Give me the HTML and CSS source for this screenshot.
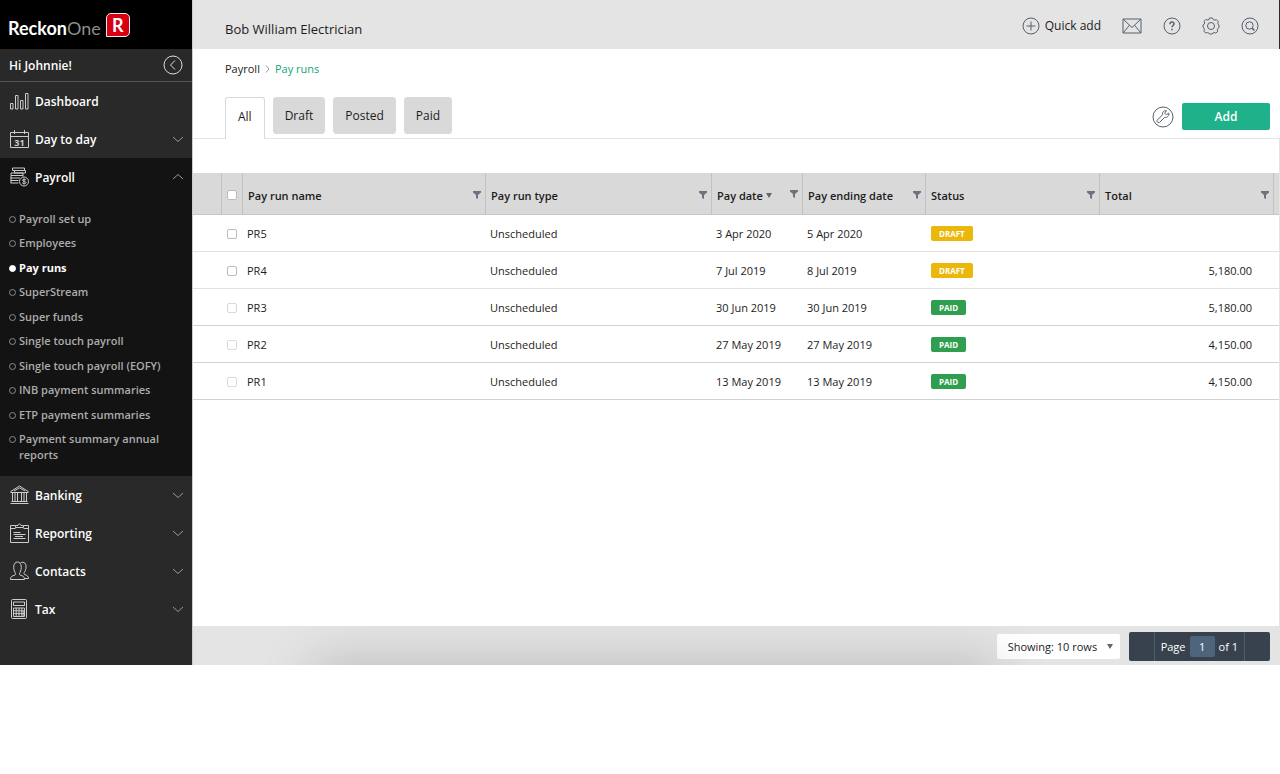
FILE: index.html
```html
<!DOCTYPE html>
<html lang="en">
<head>
    <meta charset="UTF-8">
    <meta name="viewport" content="width=device-width, initial-scale=1.0">
    <title>Pay runs</title>
    <link rel="stylesheet" href="styles.css">
</head>
<body>
    <!-- shared icons -->
    <svg class="sprite" aria-hidden="true">
        <symbol id="chevron" viewBox="0 0 12 8"><path d="M1 2l5 4.500L11 2"/></symbol>
        <symbol id="filter" viewBox="0 0 8 8"><path d="M0 0h8v1.500L5 4v4L3 7V4L0 1.500z"/></symbol>
    </svg>

    <div class="app">
        <aside class="sidebar">
            <div class="logo">
                <span class="logo-text"><b>Reckon</b>One</span>
                <span class="logo-mark">R</span>
            </div>
            <div class="greeting">
                <span>Hi Johnnie!</span>
                <button class="icon-btn" aria-label="Collapse menu">
                    <svg width="20" height="20" viewBox="0 0 20 20"><circle cx="10" cy="10" r="9"/><path d="M12 5.500L7.500 10l4.500 4.500"/></svg>
                </button>
            </div>
            <nav>
                <a class="nav-item" href="#">
                    <svg class="nav-icon" viewBox="0 0 20 20"><path d="M.5 12.500H3V18H.5zM5.500 4.500H8V18H5.500zM10.500 9.500H13V18h-2.500zM15.500 2.500H18V18h-2.500z"/></svg>
                    Dashboard
                </a>
                <a class="nav-item" href="#">
                    <svg class="nav-icon" viewBox="0 0 20 20"><path d="M.5 3.500h18v15H.5zM.5 7.500h18M4.500 1v4M14.500 1v4"/><text x="9.500" y="16.500">31</text></svg>
                    Day to day
                    <svg class="chevron"><use href="#chevron"/></svg>
                </a>
                <div class="nav-group">
                    <a class="nav-item" href="#">
                        <svg class="nav-icon" viewBox="0 0 20 20"><path d="M2.500 1h12v2.500h-12zM4.500 3.500h11V6h-11zM1 6h12v2.500H1zM1 8.500h11M.5 11H10M.5 13.500h8M.5 16h8M1 8.500v7.500M13 8.500v1"/><circle cx="14" cy="14.500" r="4.500"/><path d="M16 13c-1-1.200-3.500-1-3.500.2 0 1.500 3.500.8 3.500 2.400 0 1.300-2.800 1.400-3.800.2M14 11.500v6"/></svg>
                        Payroll
                        <svg class="chevron up"><use href="#chevron"/></svg>
                    </a>
                    <ul class="subnav">
                        <li><a href="#">Payroll set up</a></li>
                        <li><a href="#">Employees</a></li>
                        <li class="current"><a href="#">Pay runs</a></li>
                        <li><a href="#">SuperStream</a></li>
                        <li><a href="#">Super funds</a></li>
                        <li><a href="#">Single touch payroll</a></li>
                        <li><a href="#">Single touch payroll (EOFY)</a></li>
                        <li><a href="#">INB payment summaries</a></li>
                        <li><a href="#">ETP payment summaries</a></li>
                        <li><a href="#">Payment summary annual reports</a></li>
                    </ul>
                </div>
                <a class="nav-item" href="#">
                    <svg class="nav-icon" viewBox="0 0 20 20"><path d="M.8 6.500L9.500 1l8.700 5.500v1H.8zM4 6l5.500-3.200L15 6M2.500 8v8M5 8v8M7.500 8v8M11.500 8v8M14 8v8M16.500 8v8M1.500 16.500h16M.5 18.500h18"/></svg>
                    Banking
                    <svg class="chevron"><use href="#chevron"/></svg>
                </a>
                <a class="nav-item" href="#">
                    <svg class="nav-icon" viewBox="0 0 20 20"><path d="M5.500 2.500h-5v17h18v-17h-5M.5 5.500h5M13.500 5.500h5M5.500 4.500v-2H8c0-2 3-2 3 0h2.500v2zM3.500 9.500h7M3.500 11.500h12M5 13.500h8M3.500 15.500h12"/></svg>
                    Reporting
                    <svg class="chevron"><use href="#chevron"/></svg>
                </a>
                <a class="nav-item" href="#">
                    <svg class="nav-icon" viewBox="0 0 20 20"><path d="M.5 18.500c0-3 1.500-3.500 4.500-4.500.8-.5.8-1.500 0-2.500C3 8 3 1 7.500 1S12 8 10 11.500c-.8 1-.8 2 0 2.500 3 1 4.500 1.500 4.500 4.500zM10.500 2c1.500-1.500 6-1 5.500 4 0 2-.5 3.500-1.500 5-.7 1-.7 2 0 2.500 3 1 4 2 4 4h-3.500"/></svg>
                    Contacts
                    <svg class="chevron"><use href="#chevron"/></svg>
                </a>
                <a class="nav-item" href="#">
                    <svg class="nav-icon" viewBox="0 0 20 20"><rect x="1.500" y=".5" width="15" height="19" rx="1"/><path d="M3.500 3h11v3.500h-11zM3.500 9h11v8.500h-11zM3.500 11.800h11M3.500 14.600h11M6.200 9v8.500M9 9v8.500M11.800 9v8.500M13.200 12v5"/></svg>
                    Tax
                    <svg class="chevron"><use href="#chevron"/></svg>
                </a>
            </nav>
        </aside>

        <main class="main">
            <header class="topbar">
                <span class="company">Bob William Electrician</span>
                <div class="tools">
                    <button class="quick-add">
                        <svg width="18" height="18" viewBox="0 0 18 18"><circle cx="9" cy="9" r="8"/><path d="M9 4.500v9M4.500 9h9"/></svg>
                        <span>Quick add</span>
                    </button>
                    <button class="icon-btn" aria-label="Messages">
                        <svg width="20" height="18" viewBox="0 0 20 18"><path d="M1 2h18v14H1zM1 2l9 8.500L19 2M1 16l6.500-7.800M19 16l-6.500-7.800"/></svg>
                    </button>
                    <button class="icon-btn" aria-label="Help">
                        <svg width="18" height="18" viewBox="0 0 18 18"><circle cx="9" cy="9" r="8"/><path class="thick" d="M7 7.200c0-3 4-2.700 4-.4C11 8.500 9 8.500 9 10.300M9 11.800v1.500"/></svg>
                    </button>
                    <button class="icon-btn" aria-label="Settings">
                        <svg width="18" height="18" viewBox="0 0 18 18"><path d="M7.500 1h3l.7 1.700 1.300.5 1.800-.6 2 2-.6 1.800.5 1.200L17 8v2.500l-1.200.9-.5 1.200.5 1.700-2 1.800-1.700-.6-1.200.5-.7 1H7.500l-.7-1-1.200-.5-1.800.6-1.900-1.900.6-1.800-.5-1.200L1 10.300V8l1.200-.8.5-1.200-.6-1.700 1.900-1.900 1.800.7 1.200-.5z"/><circle cx="9" cy="9" r="3.500"/></svg>
                    </button>
                    <button class="icon-btn" aria-label="Search">
                        <svg width="18" height="18" viewBox="0 0 18 18"><circle cx="9" cy="9" r="8"/><circle cx="8.500" cy="8.500" r="3.700"/><path class="thick" d="M11 11l2.500 2.500"/></svg>
                    </button>
                </div>
            </header>

            <div class="breadcrumb">
                <a href="#">Payroll</a>
                <svg width="5" height="8" viewBox="0 0 5 8"><path d="M1 .5L4 4 1 7.500"/></svg>
                <a class="here" href="#">Pay runs</a>
            </div>

            <div class="tabbar">
                <button class="tab active">All</button>
                <button class="tab">Draft</button>
                <button class="tab">Posted</button>
                <button class="tab">Paid</button>
                <div class="actions">
                    <button class="icon-btn" aria-label="Customise">
                        <svg width="22" height="22" viewBox="0 0 22 22"><circle cx="11" cy="11" r="10"/><path d="M16.800 7l-2.600 1.800-1.600-1.600 1.900-2.500c-2.500-.6-4.600 1.600-3.900 4L5.400 14c-1.400 1.500.9 3.700 2.300 2.300l5-5c2.400.7 4.700-1.700 4.100-4.300zM6.800 15.200l.3-.3"/></svg>
                    </button>
                    <button class="add-btn">Add</button>
                </div>
            </div>

            <div class="grid">
                <table>
                    <colgroup>
                        <col class="c-gutter"><col class="c-check"><col><col class="c-type"><col class="c-date"><col class="c-end"><col class="c-status"><col class="c-total"><col class="c-edge">
                    </colgroup>
                    <thead>
                        <tr>
                            <th></th>
                            <th class="check"><input type="checkbox" aria-label="Select all"></th>
                            <th><div class="th">Pay run name <svg class="filter"><use href="#filter"/></svg></div></th>
                            <th><div class="th">Pay run type <svg class="filter"><use href="#filter"/></svg></div></th>
                            <th><div class="th sorted">Pay date <i class="caret"></i> <svg class="filter"><use href="#filter"/></svg></div></th>
                            <th><div class="th">Pay ending date <svg class="filter"><use href="#filter"/></svg></div></th>
                            <th><div class="th">Status <svg class="filter"><use href="#filter"/></svg></div></th>
                            <th><div class="th">Total <svg class="filter"><use href="#filter"/></svg></div></th>
                            <th></th>
                        </tr>
                    </thead>
                    <tbody>
                        <tr>
                            <td></td>
                            <td class="check"><input type="checkbox" aria-label="Select PR5"></td>
                            <td>PR5</td>
                            <td>Unscheduled</td>
                            <td>3 Apr 2020</td>
                            <td>5 Apr 2020</td>
                            <td class="status"><span class="badge draft">DRAFT</span></td>
                            <td class="total"></td>
                            <td></td>
                        </tr>
                        <tr>
                            <td></td>
                            <td class="check"><input type="checkbox" aria-label="Select PR4"></td>
                            <td>PR4</td>
                            <td>Unscheduled</td>
                            <td>7 Jul 2019</td>
                            <td>8 Jul 2019</td>
                            <td class="status"><span class="badge draft">DRAFT</span></td>
                            <td class="total">5,180.00</td>
                            <td></td>
                        </tr>
                        <tr class="locked">
                            <td></td>
                            <td class="check"><input type="checkbox" aria-label="Select PR3"></td>
                            <td>PR3</td>
                            <td>Unscheduled</td>
                            <td>30 Jun 2019</td>
                            <td>30 Jun 2019</td>
                            <td class="status"><span class="badge paid">PAID</span></td>
                            <td class="total">5,180.00</td>
                            <td></td>
                        </tr>
                        <tr class="locked">
                            <td></td>
                            <td class="check"><input type="checkbox" aria-label="Select PR2"></td>
                            <td>PR2</td>
                            <td>Unscheduled</td>
                            <td>27 May 2019</td>
                            <td>27 May 2019</td>
                            <td class="status"><span class="badge paid">PAID</span></td>
                            <td class="total">4,150.00</td>
                            <td></td>
                        </tr>
                        <tr class="locked">
                            <td></td>
                            <td class="check"><input type="checkbox" aria-label="Select PR1"></td>
                            <td>PR1</td>
                            <td>Unscheduled</td>
                            <td>13 May 2019</td>
                            <td>13 May 2019</td>
                            <td class="status"><span class="badge paid">PAID</span></td>
                            <td class="total">4,150.00</td>
                            <td></td>
                        </tr>
                    </tbody>
                </table>
            </div>

            <footer class="footer">
                <div class="rows">
                    <select aria-label="Rows per page">
                        <option>Showing: 10 rows</option>
                    </select>
                    <i class="caret"></i>
                </div>
                <div class="pager">
                    <button aria-label="Previous page"></button>
                    <label>Page <input type="text" value="1"> of 1</label>
                    <button aria-label="Next page"></button>
                </div>
            </footer>
        </main>
    </div>
</body>
</html>
```
FILE: styles.css
```css
*, *::before, *::after {
    box-sizing: border-box;
}

body {
    margin: 0;
    font-family: "Open Sans", sans-serif;
    font-size: 11px;
    color: #1c1c1c;
    background: #fff;
}

a {
    color: inherit;
    text-decoration: none;
}

button, input, select {
    font: inherit;
    color: inherit;
    margin: 0;
}

button {
    border: none;
    background: none;
    padding: 0;
    cursor: pointer;
}

svg {
    fill: none;
    stroke: currentColor;
    flex-shrink: 0;
}

.sprite {
    display: none;
}

.icon-btn {
    display: flex;
}

.app {
    display: flex;
}

/* sidebar */
.sidebar {
    width: 192px;
    flex-shrink: 0;
    padding-bottom: 37px;
    background: #292929;
    color: #fff;
}

.logo {
    display: flex;
    align-items: center;
    gap: 5px;
    height: 49px;
    padding: 0 8px;
    background: #000;
}

.logo-text {
    font-family: Lato, sans-serif;
    font-size: 18px;
    color: #8c8c8c;
    padding-top: 6px;
}

.logo-text b {
    color: #fff;
}

.logo-mark {
    width: 24px;
    height: 24px;
    border: 1px solid #eee;
    border-radius: 5px 5px 5px 0;
    background: #d8000f;
    font-family: Lato, sans-serif;
    font-size: 18px;
    font-weight: bold;
    line-height: 22px;
    text-align: center;
}

.greeting {
    display: flex;
    align-items: center;
    justify-content: space-between;
    height: 33px;
    padding: 0 9px;
    border-bottom: 1px solid #555;
    font-size: 12px;
    font-weight: 600;
}

.greeting .icon-btn {
    color: #ddd;
}

.nav-item {
    display: flex;
    align-items: center;
    gap: 5px;
    height: 38px;
    padding: 0 8px 0 10px;
    font-size: 12px;
    font-weight: 600;
}

.nav-icon {
    width: 20px;
    height: 20px;
    color: #ccc;
}

.nav-icon text {
    font-size: 9px;
    font-weight: bold;
    text-anchor: middle;
    fill: #ccc;
    stroke: none;
}

.chevron {
    width: 12px;
    height: 8px;
    margin-left: auto;
    color: #999;
}

.chevron.up {
    transform: rotate(180deg);
}

.nav-group {
    background: #131313;
}

.subnav {
    display: flex;
    flex-direction: column;
    justify-content: space-between;
    min-height: 280px;
    margin: 0;
    padding: 15px 16px 13px 9px;
    list-style: none;
    color: #acacac;
    line-height: 16px;
    font-weight: 600;
}

.subnav li {
    display: flex;
    gap: 3px;
}

.subnav li::before {
    content: "";
    flex-shrink: 0;
    width: 7px;
    height: 7px;
    margin-top: 5px;
    border: 1px solid #8a8a8a;
    border-radius: 50%;
}

.subnav .current {
    color: #fff;
    font-weight: bold;
}

.subnav .current::before {
    border-color: #fff;
    background: #fff;
}

/* main area */
.main {
    display: flex;
    flex-direction: column;
    flex: 1;
    min-width: 0;
    border-left: 1px solid #ccc;
}

.topbar {
    display: flex;
    align-items: center;
    justify-content: space-between;
    height: 49px;
    padding: 2px 20px 0 32px;
    background: #e4e4e4;
    border-right: 1px solid #222a33;
}

.company {
    font-size: 13px;
    padding-top: 6px;
}

.tools {
    display: flex;
    align-items: center;
    gap: 21px;
    color: #56606c;
}

.quick-add {
    display: flex;
    align-items: center;
    gap: 5px;
    font-size: 12px;
}

.quick-add span {
    color: #1c1c1c;
}

.thick {
    stroke-width: 1.5;
}

.breadcrumb {
    display: flex;
    align-items: center;
    gap: 5px;
    padding: 12px 32px 0;
    line-height: 16px;
}

.breadcrumb svg {
    color: #999;
}

.breadcrumb .here {
    color: #0fa678;
}

.tabbar {
    display: flex;
    align-items: flex-start;
    gap: 8px;
    margin-top: 20px;
    padding: 0 10px 0 32px;
    height: 42px;
    border-bottom: 1px solid #e4e4e4;
}

.tab {
    height: 37px;
    padding: 0 11px;
    border: 1px solid #d9d9d9;
    border-radius: 3px;
    background: #d9d9d9;
    font-size: 12px;
}

.tab.active {
    height: 42px;
    padding: 0 12px 5px;
    border-bottom: none;
    border-radius: 3px 3px 0 0;
    background: #fff;
}

.actions {
    display: flex;
    align-items: center;
    gap: 8px;
    margin: 6px 0 0 auto;
    color: #56606c;
}

.add-btn {
    width: 88px;
    height: 27px;
    border-radius: 2px;
    background: #1eb18a;
    color: #fff;
    font-size: 12px;
    font-weight: 600;
}

/* pay run table */
.grid {
    flex: 1;
    padding-top: 34px;
    border-right: 1px solid #e4e4e4;
}

table {
    width: 100%;
    table-layout: fixed;
    border-collapse: separate;
    border-spacing: 0;
}

.c-gutter { width: 29px; }
.c-check { width: 21px; }
.c-type { width: 226px; }
.c-date { width: 91px; }
.c-end { width: 123px; }
.c-status { width: 174px; }
.c-total { width: 174px; }
.c-edge { width: 5px; }

th {
    height: 42px;
    padding: 4px 4px 0 5px;
    background: #d9d9d9;
    border-right: 1px solid #c2c2c2;
    border-bottom: 1px solid #c8c8c8;
    font-weight: 600;
    text-align: left;
    white-space: nowrap;
}

th:last-child {
    border-right: none;
}

.th {
    display: flex;
    align-items: center;
    justify-content: space-between;
}

.sorted {
    justify-content: flex-start;
    gap: 3px;
}

.sorted .filter {
    margin: 0 0 4px auto;
}

.filter {
    width: 8px;
    height: 8px;
    margin-bottom: 1px;
    fill: #6a737e;
    stroke: none;
}

.caret {
    display: inline-block;
    border: 3px solid transparent;
    border-top: 5px solid #666;
    border-bottom: none;
}

td {
    height: 37px;
    padding: 0 4px;
    border-bottom: 1px solid #e2e2e2;
    white-space: nowrap;
}

.locked td {
    border-bottom-color: #d2d2d2;
}

.status {
    padding-left: 5px;
}

.total {
    padding-right: 22px;
    text-align: right;
}

th.check, td.check {
    padding: 2px 0 0 5px;
}

.check input {
    appearance: none;
    display: block;
    width: 10px;
    height: 10px;
    border: 1px solid #bbb;
    border-radius: 2px;
    background: #fff;
}

.locked .check input {
    border-color: #d9d9d9;
}

.badge {
    display: inline-block;
    padding: 0 8px;
    border-radius: 2px;
    color: #fff;
    font-size: 8px;
    font-weight: bold;
    line-height: 15px;
}

.badge.draft {
    background: #ebb70b;
}

.badge.paid {
    background: #2f9e4f;
}

/* footer */
.footer {
    position: relative;
    display: flex;
    align-items: center;
    justify-content: flex-end;
    gap: 9px;
    height: 39px;
    padding: 1px 10px 0;
    background: #e4e4e4;
    overflow: hidden;
}

/* soft shadow rising from the bottom edge */
.footer::after {
    content: "";
    position: absolute;
    top: 100%;
    left: 11%;
    right: 26%;
    height: 80px;
    box-shadow: 0 0 56px rgba(0, 0, 0, 0.2);
    pointer-events: none;
}

.rows {
    display: flex;
    align-items: center;
    width: 123px;
    height: 25px;
    padding: 0 7px 0 11px;
    border-radius: 2px;
    background: #fff;
}

.rows select {
    appearance: none;
    flex: 1;
    min-width: 0;
    border: none;
    background: none;
    padding: 0;
}

.pager {
    display: flex;
    height: 29px;
    border-radius: 2px;
    background: #38424f;
    color: #fff;
}

.pager button {
    width: 25px;
}

.pager label {
    display: flex;
    align-items: center;
    gap: 4px;
    padding: 0 6px;
    border: 1px solid #4d5e6e;
    border-width: 0 1px;
}

.pager input {
    width: 25px;
    height: 21px;
    padding: 0;
    border: none;
    border-radius: 2px;
    background: #4e647b;
    text-align: center;
}
```
